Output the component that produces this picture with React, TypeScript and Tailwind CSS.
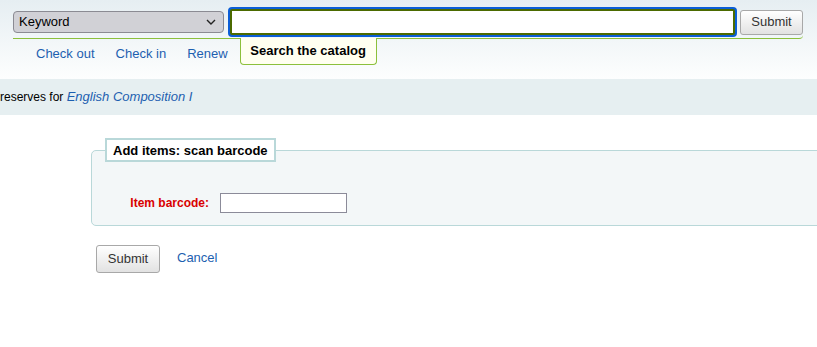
export default function App() {
  return (
    <div className="min-h-[347px] bg-white font-['Liberation_Sans',Arial,sans-serif] text-[13px] text-black">
      {/* Header search */}
      <div className="h-[79px] bg-gradient-to-b from-[#e6eef2] to-[#fdfefe]">
        <div className="ml-[13px] w-[790px] pt-[9px]">
          <div className="flex items-center border-b border-[#8cc03b] rounded-br-[4px] pb-[3px]">
            <div className="relative w-[211px]">
              <select
                defaultValue="kw"
                className="block h-[22px] w-full appearance-none rounded-[4px] border border-[#8b8b93] bg-[#d1d1d6] pl-[5px] text-[13px] leading-[20px] text-black"
              >
                <option value="kw">Keyword</option>
              </select>
              <svg
                className="pointer-events-none absolute right-[8px] top-[8px]"
                width="10"
                height="6"
                viewBox="0 0 10 6"
              >
                <path d="M1 1l4 4 4-4" fill="none" stroke="#222" strokeWidth="1.4" />
              </svg>
            </div>
            <input
              type="text"
              className="ml-[6px] h-[26px] w-[505px] rounded-[2px] border-2 border-[#4b6a00] bg-white shadow-[0_0_0_2px_#0b5ed7] outline-none"
            />
            <button className="ml-[5px] h-[25px] w-[63px] rounded-[3px] border border-[#a8a8a8] bg-gradient-to-b from-white to-[#e2e2e2] text-[13px] text-[#333]">
              Submit
            </button>
          </div>
          <div className="flex items-start">
            <a className="ml-[23px] mt-[5px] text-[#1d5fb0]">Check out</a>
            <a className="ml-[21px] mt-[5px] text-[#1d5fb0]">Check in</a>
            <a className="ml-[21px] mt-[5px] text-[#1d5fb0]">Renew</a>
            <div className="ml-[12px] -mt-px flex h-[27px] w-[137px] items-center justify-center rounded-b-[4px] border border-t-0 border-[#8cc03b] bg-[#fffff0] pb-px font-bold">
              Search the catalog
            </div>
          </div>
        </div>
      </div>

      {/* Breadcrumb band */}
      <div className="flex h-[36px] items-center bg-[#e6eff1] pl-0">
        <span className="text-[12px]">reserves for&nbsp;</span>
        <a className="italic text-[#1d5fb0]">English Composition I</a>
      </div>

      {/* Form */}
      <form className="mt-[23px]">
        <fieldset className="ml-[91px] mr-[-20px] rounded-l-[5px] border border-[#b9d8d9] bg-[#f3f7f8] pl-[13px] pr-0 pb-[12px] pt-[31px]">
          <legend className="border-2 border-[#b9d8d9] bg-white px-[6px] pt-[3px] pb-[2px] font-bold leading-[15px]">
            Add items: scan barcode
          </legend>
          <div className="flex items-center">
            <label className="w-[104px] text-right text-[12px] font-bold text-[#d90000]">Item barcode:</label>
            <input
              type="text"
              className="ml-[11px] h-[20px] w-[127px] border border-[#8b8b99] bg-white outline-none"
            />
          </div>
        </fieldset>
        <div className="mt-[19px] flex items-center pl-[96px]">
          <button className="h-[28px] w-[64px] rounded-[3px] border border-[#a8a8a8] bg-gradient-to-b from-white to-[#e2e2e2] text-[13px] text-[#333]">
            Submit
          </button>
          <a className="ml-[17px] -mt-[2px] text-[#1d5fb0]">Cancel</a>
        </div>
      </form>
    </div>
  );
}
